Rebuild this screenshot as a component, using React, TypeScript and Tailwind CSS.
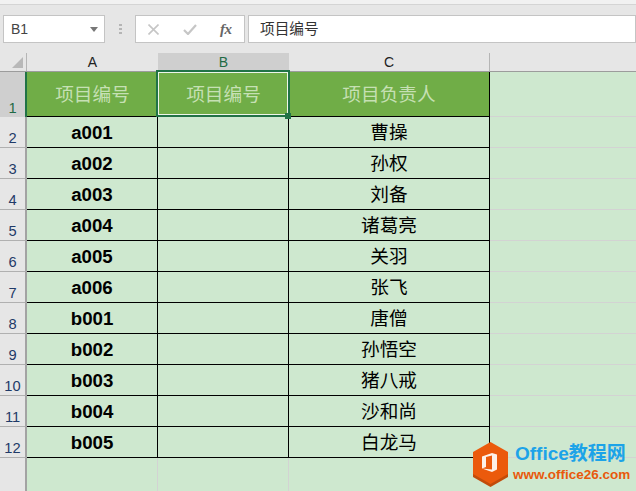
const rows = [
  ['a001', '曹操'],
  ['a002', '孙权'],
  ['a003', '刘备'],
  ['a004', '诸葛亮'],
  ['a005', '关羽'],
  ['a006', '张飞'],
  ['b001', '唐僧'],
  ['b002', '孙悟空'],
  ['b003', '猪八戒'],
  ['b004', '沙和尚'],
  ['b005', '白龙马'],
];

const cjk = "font-['Liberation_Sans','Noto_Sans_CJK_SC',sans-serif]";

function Logo() {
  return (
    <div className="absolute left-[473px] top-[442px] flex items-start gap-[4px]">
      <svg width="36" height="45" viewBox="0 0 36 45">
        <polygon points="17.5,1 35,11 35,35 17.5,45 0,35 0,11" fill="#c24c0a" />
        <polygon points="17.5,0 35,10 35,32 17.5,42 0,32 0,10" fill="#eb5a0c" />
        <polygon points="9,14.5 19,11 24,12.5 24,27.5 19,30 9,26.5 19,27.5 19,13.5 13,15 13,25 9,26.5" fill="#fdf1e8" />
      </svg>
      <div className={`flex flex-col ${cjk} font-bold`}>
        <span className="text-[#1ca3e8] text-[19px] leading-[22px] mt-[1px] ml-[2px] whitespace-nowrap">Office教程网</span>
        <span className="text-[#e8590c] text-[13.5px] leading-[15px] mt-[2px] whitespace-nowrap">www.office26.com</span>
      </div>
    </div>
  );
}

export default function App() {
  return (
    <div className={`relative w-[636px] h-[491px] overflow-hidden bg-[#e6e6e6] ${cjk}`}>
      {/* ribbon edge */}
      <div className="h-[5px] bg-[#f1f1f1] border-b border-[#d4d4d4]" />

      {/* formula bar */}
      <div className="flex items-start h-[48px] pt-[10px] pl-[3px]">
        <div className="flex items-center justify-between w-[102px] h-[28px] bg-white border border-[#c4c4c4] pl-[7px] pr-[6px]">
          <span className="text-[14px] text-[#444]">B1</span>
          <svg width="8" height="5" viewBox="0 0 8 5"><polygon points="0,0 8,0 4,5" fill="#777" /></svg>
        </div>
        <div className="flex flex-col gap-[2px] w-[30px] items-center pt-[9px]">
          <span className="w-[3px] h-[2px] bg-[#b5b5b5]" />
          <span className="w-[3px] h-[2px] bg-[#b5b5b5]" />
          <span className="w-[3px] h-[2px] bg-[#b5b5b5]" />
        </div>
        <div className="flex items-center w-[110px] h-[28px] bg-white border border-[#c4c4c4]">
          <svg className="ml-[12px]" width="11" height="11" viewBox="0 0 11 11">
            <path d="M0.5 0.5 L10.5 10.5 M10.5 0.5 L0.5 10.5" stroke="#c6c6c6" strokeWidth="1.6" />
          </svg>
          <svg className="ml-[24px]" width="14" height="11" viewBox="0 0 14 11">
            <path d="M1 6 L5 10 L13 1" stroke="#c6c6c6" strokeWidth="2.2" fill="none" />
          </svg>
          <span className="ml-[23px] font-['Liberation_Serif',serif] italic font-bold text-[15px] tracking-[-0.5px] text-[#666]">fx</span>
        </div>
        <div className="flex items-center flex-1 ml-[3px] h-[28px] bg-white border border-[#c4c4c4] pl-[11px]">
          <span className="text-[14.67px] text-[#333]">项目编号</span>
        </div>
      </div>

      {/* column headers */}
      <div className="flex h-[19px] text-[14px] text-[#222] border-b border-[#9c9c9c]">
        <div className="relative w-[27px] border-r border-[#b5b5b5]">
          <svg className="absolute right-[3px] bottom-[3px]" width="11" height="11" viewBox="0 0 11 11">
            <polygon points="11,0 11,11 0,11" fill="#b8b8b8" />
          </svg>
        </div>
        <div className="flex items-center justify-center w-[131px] pt-[1px]">A</div>
        <div className="flex items-center justify-center w-[131px] pt-[1px] bg-[#cfcfcf] text-[#1f6b45]">B</div>
        <div className="flex items-center justify-center w-[201px] pt-[1px] border-r border-[#b5b5b5]">C</div>
      </div>

      {/* header row */}
      <div className="flex h-[45px]">
        <div className="flex items-end justify-center w-[27px] bg-[#cfcfcf] text-[#1f6b45] text-[14.67px] leading-[18px] border-r-2 border-[#217346]">1</div>
        <div className="flex items-center justify-center w-[131px] pt-[2px] bg-[#70ad47] border-b border-black text-[18.67px] text-[#c6e0b4]">项目编号</div>
        <div className="flex items-center justify-center w-[131px] pt-[2px] bg-[#70ad47] border-b border-black text-[18.67px] text-[#c6e0b4]">项目编号</div>
        <div className="flex items-center justify-center w-[201px] pt-[2px] bg-[#70ad47] border-b border-black border-r text-[18.67px] text-[#c6e0b4]">项目负责人</div>
        <div className="flex-1 bg-[#cee8cf] border-b border-[#d3d3d3]" />
      </div>

      {/* data rows */}
      {rows.map(([code, name], i) => (
        <div key={code} className="flex h-[31px]">
          <div className="flex items-end justify-center w-[27px] text-[14.67px] leading-[18px] text-[#1f3a68] border-r-2 border-b border-r-[#a3a3a3] border-b-[#b0b0b0]">{i + 2}</div>
          <div className="flex items-center justify-center w-[131px] pt-[2px] bg-[#cee8cf] border-b border-r border-black text-[18.67px] font-bold text-black">{code}</div>
          <div className="w-[131px] bg-[#cee8cf] border-b border-r border-black" />
          <div className="flex items-center justify-center w-[201px] pt-[2px] bg-[#cee8cf] border-b border-r border-black text-[18.67px] text-black">{name}</div>
          <div className="flex-1 bg-[#cee8cf] border-b border-[#d3d3d3]" />
        </div>
      ))}

      {/* below the table */}
      <div className="flex h-[33px]">
        <div className="w-[27px] border-r-2 border-[#a3a3a3]" />
        <div className="w-[131px] bg-[#cee8cf] border-r border-[#d3d3d3]" />
        <div className="w-[131px] bg-[#cee8cf] border-r border-[#d3d3d3]" />
        <div className="flex-1 bg-[#cee8cf]" />
      </div>

      {/* selection on B1 */}
      <div className="absolute left-[156px] top-[70px] w-[134px] h-[47px] border-2 border-[#217346]">
        <div className="w-full h-full border border-[#eef5ea]" />
        <div className="absolute right-[-3px] bottom-[-4px] w-[6px] h-[6px] bg-[#217346]" />
      </div>

      <Logo />
    </div>
  );
}
